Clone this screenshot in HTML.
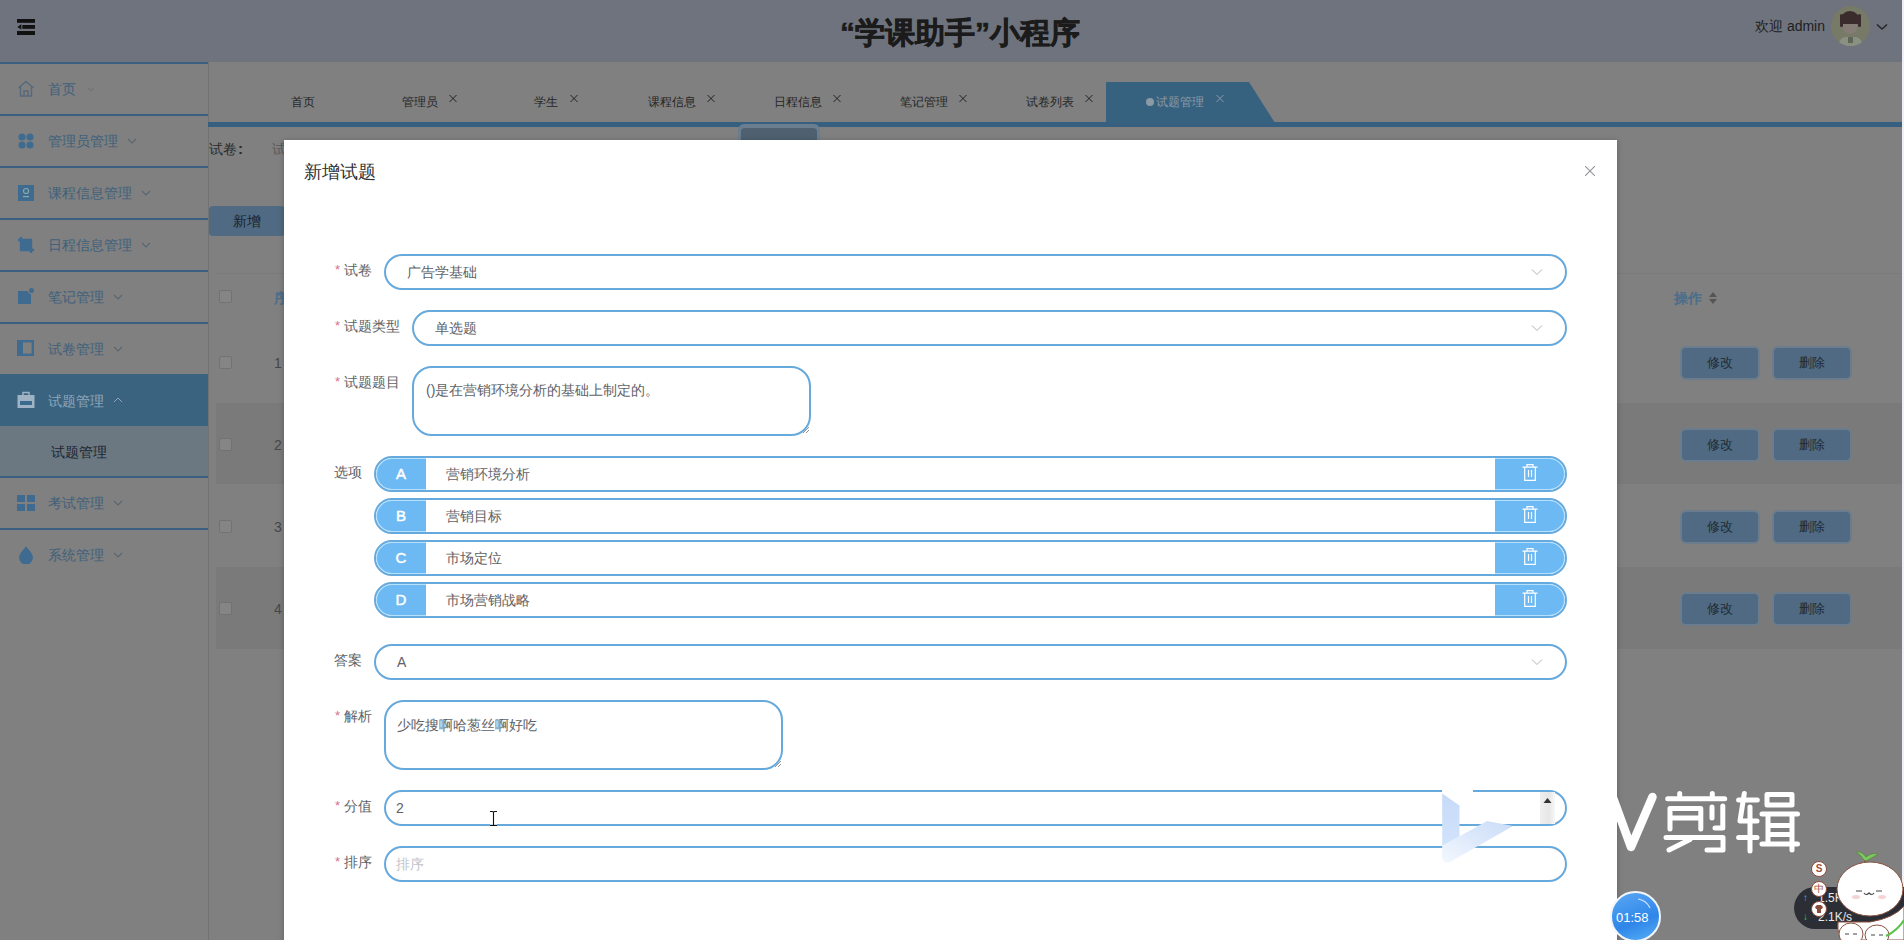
<!DOCTYPE html>
<html><head><meta charset="utf-8">
<style>
*{box-sizing:border-box;margin:0;padding:0}
html,body{width:1904px;height:940px;overflow:hidden;background:#808080;font-family:"Liberation Sans",sans-serif;position:relative}
.a{position:absolute;white-space:nowrap}
/* header */
#hdr{left:0;top:0;width:1902px;height:62px;background:#6e737d}
#rstrip{left:1902px;top:0;width:2px;height:940px;background:#efeff5}
/* sidebar */
#side{left:0;top:62px;width:209px;height:878px;background:#808080;border-right:1px solid #727272}
.sl{position:absolute;left:0;width:208px;height:2px;background:#3b5f80}
.si{position:absolute;left:48px;font-size:14px;color:#40607b;line-height:16px}
.chev{position:absolute}
/* tabs */
.tab{position:absolute;top:95px;font-size:12px;color:#262626;line-height:14px}
.tx{position:absolute;top:94px}
/* content */
.row{position:absolute;left:216px;width:1686px;height:82px}
.cb{position:absolute;left:219px;width:13px;height:13px;border:1px solid #727272;border-radius:2px;background:#858585}
.btn{position:absolute;width:76px;height:30px;border-radius:4px;background:#4f6a82;color:#1e2a35;font-size:13px;text-align:center;line-height:30px;box-shadow:0 0 0 2px #6b7d8c}
/* modal */
#modal{left:284px;top:140px;width:1333px;height:820px;background:#fff;box-shadow:0 1px 6px rgba(0,0,0,.25)}
.lbl{position:absolute;font-size:14px;color:#606266;line-height:16px}
.req{position:absolute;font-size:13px;color:#d8708c;line-height:16px}
.inp{position:absolute;border:2px solid #66a9dc;border-radius:18px;background:#fff;height:36px}
.txt{position:absolute;font-size:14px;color:#606266;line-height:16px}
.opt{position:absolute;left:374px;width:1193px;height:36px;border:2px solid #66a9dc;border-radius:18px;background:#fff;overflow:hidden}
.pre{position:absolute;left:0;top:0;width:50px;height:32px;background:#6cb9f3;border:1px solid #b4e0ff;border-right:none;border-radius:16px 0 0 16px;color:#fff;font-size:15px;text-align:center;line-height:29px;font-weight:normal;-webkit-text-stroke:0.5px #fff;text-indent:-1px}
.app{position:absolute;right:0;top:0;width:70px;height:32px;background:#6cb9f3;border:1px solid #b4e0ff;border-left:none;border-radius:0 16px 16px 0}
.otx{position:absolute;left:70px;top:8px;font-size:14px;color:#606266;line-height:16px}
</style></head><body>

<!-- HEADER -->
<div id="hdr" class="a">
  <svg class="a" style="left:17px;top:19px" width="18" height="16" viewBox="0 0 18 16">
    <rect x="0" y="0" width="18" height="3.8" fill="#111"/>
    <rect x="5.3" y="6" width="12.7" height="3.8" fill="#111"/>
    <rect x="0" y="12" width="18" height="4" fill="#111"/>
    <path d="M0.3 7.9 L4.3 5.2 L4.3 10.6 Z" fill="#111"/>
  </svg>
  <div class="a" style="left:840px;top:14px;font-size:30px;font-weight:bold;color:#1b1b1b;line-height:38px;-webkit-text-stroke:0.6px #1b1b1b">“学课助手”小程序</div>
  <div class="a" style="left:1755px;top:18px;font-size:14px;color:#1e1e22;line-height:16px">欢迎 admin</div>
  <div class="a" style="left:1831px;top:6px;width:39px;height:40px;border-radius:50%;background:#767a66;overflow:hidden">
    <div class="a" style="left:12px;top:12px;width:14px;height:16px;border-radius:3px 3px 7px 7px;background:#857d75"></div>
    <div class="a" style="left:9px;top:5px;width:20px;height:13px;border-radius:10px 10px 3px 3px;background:#3a2c2c"></div>
    <div class="a" style="left:9px;top:8px;width:3px;height:13px;border-radius:2px;background:#3a2c2c"></div>
    <div class="a" style="left:27px;top:8px;width:3px;height:13px;border-radius:2px;background:#3a2c2c"></div>
    <div class="a" style="left:8px;top:31px;width:23px;height:10px;border-radius:7px 7px 0 0;background:#8b9182"></div>
    <div class="a" style="left:17px;top:31px;width:5px;height:6px;background:#5f6658"></div>
  </div>
  <svg class="a" style="left:1876px;top:23px" width="12" height="8" viewBox="0 0 12 8"><path d="M1 1.5 L6 6 L11 1.5" stroke="#26262a" stroke-width="1.6" fill="none"/></svg>
</div>
<div id="rstrip" class="a"></div>

<!-- SIDEBAR -->
<div id="side" class="a"></div>
<div class="sl" style="top:62px"></div>
<div class="sl" style="top:114px"></div>
<div class="sl" style="top:166px"></div>
<div class="sl" style="top:218px"></div>
<div class="sl" style="top:270px"></div>
<div class="sl" style="top:322px"></div>
<div class="a" style="left:0;top:374px;width:208px;height:52px;background:#39637f"></div>
<div class="a" style="left:0;top:426px;width:208px;height:50px;background:#6b7882"></div>
<div class="sl" style="top:476px"></div>
<div class="sl" style="top:528px"></div>

<!-- icons -->
<svg class="a" style="left:17px;top:80px" width="18" height="17" viewBox="0 0 18 17"><path d="M1.5 8 L9 1.5 L16.5 8 M3.5 6.5 V16 H14.5 V6.5 M7 16 V11 H11 V16" stroke="#56697a" stroke-width="1.4" fill="none"/></svg>
<svg class="a" style="left:18px;top:133px" width="16" height="16" viewBox="0 0 16 16" fill="#3f6b90"><circle cx="4" cy="4" r="3.6"/><circle cx="12" cy="4" r="3.6"/><circle cx="4" cy="12" r="3.6"/><circle cx="12" cy="12" r="3.6"/></svg>
<svg class="a" style="left:18px;top:185px" width="16" height="16" viewBox="0 0 16 16"><rect x="0" y="0" width="16" height="16" fill="#3f6b90"/><circle cx="8" cy="6" r="2.5" stroke="#8aa" stroke-width="1.2" fill="none"/><rect x="5" y="11" width="6" height="1.2" fill="#8aa"/></svg>
<svg class="a" style="left:17px;top:236px" width="18" height="18" viewBox="0 0 18 18"><path d="M4 1 V14 H17 M1 4 H14 V17" stroke="#3f6b90" stroke-width="2.4" fill="none"/><rect x="4" y="4" width="10" height="10" fill="#3f6b90"/></svg>
<svg class="a" style="left:18px;top:288px" width="16" height="16" viewBox="0 0 16 16" fill="#3f6b90"><path d="M0 3 H10 A3 3 0 0 0 13 6 V16 H0 Z"/><circle cx="13.5" cy="2.5" r="2.5"/></svg>
<svg class="a" style="left:17px;top:340px" width="17" height="16" viewBox="0 0 17 16"><rect x="1.2" y="1.2" width="14.6" height="13.6" stroke="#3f6b90" stroke-width="2.4" fill="none"/><rect x="1" y="1" width="5" height="14" fill="#3f6b90"/></svg>
<svg class="a" style="left:17px;top:391px" width="18" height="17" viewBox="0 0 18 17"><path d="M6 4 V1.5 H12 V4" stroke="#9fb3c4" stroke-width="1.5" fill="none"/><rect x="0.5" y="4" width="17" height="13" fill="#9fb3c4"/><rect x="3" y="10" width="12" height="4" fill="#3b6a8f"/></svg>
<svg class="a" style="left:17px;top:495px" width="18" height="16" viewBox="0 0 18 16" fill="#3f6b90"><rect x="0" y="0" width="8" height="7"/><rect x="10" y="0" width="8" height="7"/><rect x="0" y="9" width="8" height="7"/><rect x="10" y="9" width="8" height="7"/></svg>
<svg class="a" style="left:18px;top:546px" width="16" height="18" viewBox="0 0 16 18" fill="#3f6b90"><path d="M8 0.5 C8 0.5 1 7.5 1 11.5 A7 7 0 0 0 15 11.5 C15 7.5 8 0.5 8 0.5 Z"/></svg>

<div class="si" style="top:81px">首页</div>
<div class="si" style="top:133px">管理员管理</div>
<div class="si" style="top:185px">课程信息管理</div>
<div class="si" style="top:237px">日程信息管理</div>
<div class="si" style="top:289px">笔记管理</div>
<div class="si" style="top:341px">试卷管理</div>
<div class="si" style="top:393px;color:#8fa5b8">试题管理</div>
<div class="a" style="left:51px;top:444px;font-size:14px;color:#1b2530;line-height:16px">试题管理</div>
<div class="si" style="top:495px">考试管理</div>
<div class="si" style="top:547px">系统管理</div>
<svg class="chev" style="left:86px;top:86px" width="9" height="6" viewBox="0 0 9 6"><path d="M2 2 L5 5 L8 1.5" stroke="#66717a" stroke-width="1" fill="none"/></svg>
<svg class="chev" style="left:127px;top:138px" width="10" height="6" viewBox="0 0 10 6"><path d="M1 1 L5 5 L9 1" stroke="#5a6670" stroke-width="1.2" fill="none"/></svg>
<svg class="chev" style="left:141px;top:190px" width="10" height="6" viewBox="0 0 10 6"><path d="M1 1 L5 5 L9 1" stroke="#5a6670" stroke-width="1.2" fill="none"/></svg>
<svg class="chev" style="left:141px;top:242px" width="10" height="6" viewBox="0 0 10 6"><path d="M1 1 L5 5 L9 1" stroke="#5a6670" stroke-width="1.2" fill="none"/></svg>
<svg class="chev" style="left:113px;top:294px" width="10" height="6" viewBox="0 0 10 6"><path d="M1 1 L5 5 L9 1" stroke="#5a6670" stroke-width="1.2" fill="none"/></svg>
<svg class="chev" style="left:113px;top:346px" width="10" height="6" viewBox="0 0 10 6"><path d="M1 1 L5 5 L9 1" stroke="#5a6670" stroke-width="1.2" fill="none"/></svg>
<svg class="chev" style="left:113px;top:397px" width="10" height="6" viewBox="0 0 10 6"><path d="M1 5 L5 1 L9 5" stroke="#8fa5b8" stroke-width="1" fill="none"/></svg>
<svg class="chev" style="left:113px;top:500px" width="10" height="6" viewBox="0 0 10 6"><path d="M1 1 L5 5 L9 1" stroke="#5a6670" stroke-width="1.2" fill="none"/></svg>
<svg class="chev" style="left:113px;top:552px" width="10" height="6" viewBox="0 0 10 6"><path d="M1 1 L5 5 L9 1" stroke="#5a6670" stroke-width="1.2" fill="none"/></svg>

<!-- TABS -->
<div class="a" style="left:208px;top:122px;width:1694px;height:5px;background:#365f80"></div>
<svg class="a" style="left:1106px;top:82px" width="170" height="41" viewBox="0 0 170 41"><path d="M0 0 H143 L169 41 H0 Z" fill="#36617f"/></svg>
<div class="tab" style="left:291px">首页</div>
<div class="tab" style="left:402px">管理员</div>
<div class="tab" style="left:534px">学生</div>
<div class="tab" style="left:648px">课程信息</div>
<div class="tab" style="left:774px">日程信息</div>
<div class="tab" style="left:900px">笔记管理</div>
<div class="tab" style="left:1026px">试卷列表</div>
<div class="a" style="left:1146px;top:98px;width:8px;height:8px;border-radius:50%;background:#8b9aa7"></div>
<div class="tab" style="left:1156px;color:#8b9aa7">试题管理</div>
<svg class="a" style="left:449px;top:95px" width="8" height="7" viewBox="0 0 8 7"><path d="M0.5 0 L7.5 7 M7.5 0 L0.5 7" stroke="#222" stroke-width="1"/></svg>
<svg class="a" style="left:570px;top:95px" width="8" height="7" viewBox="0 0 8 7"><path d="M0.5 0 L7.5 7 M7.5 0 L0.5 7" stroke="#222" stroke-width="1"/></svg>
<svg class="a" style="left:707px;top:95px" width="8" height="7" viewBox="0 0 8 7"><path d="M0.5 0 L7.5 7 M7.5 0 L0.5 7" stroke="#222" stroke-width="1"/></svg>
<svg class="a" style="left:833px;top:95px" width="8" height="7" viewBox="0 0 8 7"><path d="M0.5 0 L7.5 7 M7.5 0 L0.5 7" stroke="#222" stroke-width="1"/></svg>
<svg class="a" style="left:959px;top:95px" width="8" height="7" viewBox="0 0 8 7"><path d="M0.5 0 L7.5 7 M7.5 0 L0.5 7" stroke="#222" stroke-width="1"/></svg>
<svg class="a" style="left:1085px;top:95px" width="8" height="7" viewBox="0 0 8 7"><path d="M0.5 0 L7.5 7 M7.5 0 L0.5 7" stroke="#222" stroke-width="1"/></svg>
<svg class="a" style="left:1216px;top:95px" width="8" height="7" viewBox="0 0 8 7"><path d="M0.5 0 L7.5 7 M7.5 0 L0.5 7" stroke="#8b9aa7" stroke-width="1"/></svg>

<!-- CONTENT (behind mask) -->
<div class="a" style="left:209px;top:141px;font-size:14px;color:#2b2b2b;line-height:16px">试卷</div><div class="a" style="left:238px;top:141px;font-size:15px;color:#2b2b2b;line-height:16px;font-weight:bold">:</div>
<div class="a" style="left:272px;top:141px;font-size:14px;color:#5a5a5a;line-height:16px">试</div>
<div class="a" style="left:738px;top:124px;width:82px;height:20px;border-radius:6px;background:#6b7e8f"></div>
<div class="a" style="left:741px;top:128px;width:76px;height:16px;border-radius:4px;background:#4f6170"></div>
<div class="a" style="left:209px;top:206px;width:76px;height:30px;border-radius:4px;background:#4f6a82"></div>
<div class="a" style="left:233px;top:213px;font-size:14px;color:#1a222a;line-height:16px">新增</div>

<div class="a" style="left:215px;top:273px;width:1687px;height:1px;background:#7a7a7a"></div>
<div class="row" style="top:403px;height:81px;background:#7a7a7a"></div>
<div class="row" style="top:567px;height:82px;background:#7a7a7a"></div>
<div class="cb" style="top:290px"></div>
<div class="cb" style="top:356px"></div>
<div class="cb" style="top:438px"></div>
<div class="cb" style="top:520px"></div>
<div class="cb" style="top:602px"></div>
<div class="a" style="left:274px;top:290px;font-size:14px;font-weight:bold;color:#4a6d8a;line-height:16px">序</div>
<div class="a" style="left:274px;top:355px;font-size:14px;color:#474747;line-height:16px">1</div>
<div class="a" style="left:274px;top:437px;font-size:14px;color:#474747;line-height:16px">2</div>
<div class="a" style="left:274px;top:519px;font-size:14px;color:#474747;line-height:16px">3</div>
<div class="a" style="left:274px;top:601px;font-size:14px;color:#474747;line-height:16px">4</div>
<div class="a" style="left:1674px;top:290px;font-size:14px;font-weight:bold;color:#4a6d8a;line-height:16px">操作</div>
<svg class="a" style="left:1708px;top:291px" width="10" height="14" viewBox="0 0 10 14" fill="#555"><path d="M5 1 L9 6 H1 Z M1 8 H9 L5 13 Z"/></svg>

<div class="btn" style="left:1682px;top:348px">修改</div>
<div class="btn" style="left:1774px;top:348px">删除</div>
<div class="btn" style="left:1682px;top:430px">修改</div>
<div class="btn" style="left:1774px;top:430px">删除</div>
<div class="btn" style="left:1682px;top:512px">修改</div>
<div class="btn" style="left:1774px;top:512px">删除</div>
<div class="btn" style="left:1682px;top:594px">修改</div>
<div class="btn" style="left:1774px;top:594px">删除</div>

<!-- MODAL -->
<div id="modal" class="a"></div>
<div class="a" style="left:304px;top:162px;font-size:18px;color:#303133;line-height:20px">新增试题</div>
<svg class="a" style="left:1585px;top:166px" width="10" height="10" viewBox="0 0 10 10"><path d="M0 0 L10 10 M10 0 L0 10" stroke="#909399" stroke-width="1.1"/></svg>

<!-- form -->
<div class="req" style="left:335px;top:262px">*</div><div class="lbl" style="left:344px;top:262px">试卷</div>
<div class="inp" style="left:384px;top:254px;width:1183px"></div>
<div class="txt" style="left:407px;top:264px">广告学基础</div>
<svg class="a" style="left:1531px;top:268px" width="12" height="8" viewBox="0 0 12 8"><path d="M1 1.5 L6 6.5 L11 1.5" stroke="#b4b4b4" stroke-width="1" fill="none"/></svg>

<div class="req" style="left:335px;top:318px">*</div><div class="lbl" style="left:344px;top:318px">试题类型</div>
<div class="inp" style="left:412px;top:310px;width:1155px"></div>
<div class="txt" style="left:435px;top:320px">单选题</div>
<svg class="a" style="left:1531px;top:324px" width="12" height="8" viewBox="0 0 12 8"><path d="M1 1.5 L6 6.5 L11 1.5" stroke="#b4b4b4" stroke-width="1" fill="none"/></svg>

<div class="req" style="left:335px;top:374px">*</div><div class="lbl" style="left:344px;top:374px">试题题目</div>
<div class="inp" style="left:412px;top:366px;width:399px;height:70px;border-radius:20px"></div>
<div class="txt" style="left:426px;top:382px">()是在营销环境分析的基础上制定的。</div>

<div class="lbl" style="left:334px;top:464px">选项</div>
<div class="opt" style="top:456px"><div class="pre">A</div><div class="otx">营销环境分析</div><div class="app"></div></div>
<div class="opt" style="top:498px"><div class="pre">B</div><div class="otx">营销目标</div><div class="app"></div></div>
<div class="opt" style="top:540px"><div class="pre">C</div><div class="otx">市场定位</div><div class="app"></div></div>
<div class="opt" style="top:582px"><div class="pre">D</div><div class="otx">市场营销战略</div><div class="app"></div></div>
<svg class="a" style="left:1522px;top:464px" width="16" height="17" viewBox="0 0 16 17"><path d="M5 3 V0.7 H11 V3 M0.5 3.2 H15.5 M2.7 3.2 V16.3 H13.3 V3.2 M6.5 6 V13 M9.5 6 V13" stroke="#fff" stroke-width="1.2" fill="none"/></svg>
<svg class="a" style="left:1522px;top:506px" width="16" height="17" viewBox="0 0 16 17"><path d="M5 3 V0.7 H11 V3 M0.5 3.2 H15.5 M2.7 3.2 V16.3 H13.3 V3.2 M6.5 6 V13 M9.5 6 V13" stroke="#fff" stroke-width="1.2" fill="none"/></svg>
<svg class="a" style="left:1522px;top:548px" width="16" height="17" viewBox="0 0 16 17"><path d="M5 3 V0.7 H11 V3 M0.5 3.2 H15.5 M2.7 3.2 V16.3 H13.3 V3.2 M6.5 6 V13 M9.5 6 V13" stroke="#fff" stroke-width="1.2" fill="none"/></svg>
<svg class="a" style="left:1522px;top:590px" width="16" height="17" viewBox="0 0 16 17"><path d="M5 3 V0.7 H11 V3 M0.5 3.2 H15.5 M2.7 3.2 V16.3 H13.3 V3.2 M6.5 6 V13 M9.5 6 V13" stroke="#fff" stroke-width="1.2" fill="none"/></svg>

<div class="lbl" style="left:334px;top:652px">答案</div>
<div class="inp" style="left:374px;top:644px;width:1193px"></div>
<div class="txt" style="left:397px;top:654px">A</div>
<svg class="a" style="left:1531px;top:658px" width="12" height="8" viewBox="0 0 12 8"><path d="M1 1.5 L6 6.5 L11 1.5" stroke="#b4b4b4" stroke-width="1" fill="none"/></svg>

<div class="req" style="left:335px;top:708px">*</div><div class="lbl" style="left:344px;top:708px">解析</div>
<div class="inp" style="left:384px;top:700px;width:399px;height:70px;border-radius:20px"></div>
<div class="txt" style="left:397px;top:717px">少吃搜啊哈葱丝啊好吃</div>

<div class="req" style="left:335px;top:798px">*</div><div class="lbl" style="left:344px;top:798px">分值</div>
<div class="inp" style="left:384px;top:790px;width:1183px"></div>
<div class="txt" style="left:396px;top:800px">2</div>

<div class="req" style="left:335px;top:854px">*</div><div class="lbl" style="left:344px;top:854px">排序</div>
<div class="inp" style="left:384px;top:846px;width:1183px"></div>
<div class="txt" style="left:396px;top:856px;color:#c0c4cc">排序</div>

<!-- resize handles -->
<svg class="a" style="left:800px;top:424px" width="10" height="10" viewBox="0 0 10 10"><path d="M9 3 L3 9 M9 6 L6 9" stroke="#777" stroke-width="0.8"/></svg>
<svg class="a" style="left:772px;top:758px" width="10" height="10" viewBox="0 0 10 10"><path d="M9 3 L3 9 M9 6 L6 9" stroke="#777" stroke-width="0.8"/></svg>
<!-- number spinner -->
<div class="a" style="left:1540px;top:792px;width:15px;height:32px;background:linear-gradient(90deg,#f0f0f0,#e6e6e6 60%,#f8f8f8)"></div>
<svg class="a" style="left:1543px;top:797px" width="9" height="7" viewBox="0 0 9 7"><path d="M0.5 6 L4.5 1 L8.5 6 Z" fill="#333"/></svg>
<!-- I-beam cursor -->
<svg class="a" style="left:489px;top:810px" width="9" height="17" viewBox="0 0 9 17"><path d="M1 1.5 H3.5 Q4.5 1.5 4.5 2.5 Q4.5 1.5 5.5 1.5 H8 M4.5 2.5 V15 M1 15.5 H3.5 Q4.5 15.5 4.5 14.5 Q4.5 15.5 5.5 15.5 H8" stroke="#fff" stroke-width="2.6" fill="none" stroke-opacity="0.8"/><path d="M1 1.5 H3.5 Q4.5 1.5 4.5 2.5 Q4.5 1.5 5.5 1.5 H8 M4.5 2.5 V15 M1 15.5 H3.5 Q4.5 15.5 4.5 14.5 Q4.5 15.5 5.5 15.5 H8" stroke="#111" stroke-width="1.1" fill="none"/></svg>

<!-- watermark play logo -->
<svg class="a" style="left:1430px;top:778px" width="100" height="92" viewBox="1430 778 100 92">
  <defs>
    <linearGradient id="g1" x1="0" y1="0" x2="0" y2="1"><stop offset="0" stop-color="#c6daf8"/><stop offset="1" stop-color="#d2e3fb"/></linearGradient>
    <linearGradient id="g2" x1="0" y1="1" x2="1" y2="0"><stop offset="0" stop-color="#f4f8fe"/><stop offset="0.5" stop-color="#dde9fb"/><stop offset="1" stop-color="#cadcf8"/></linearGradient>
  </defs>
  <path d="M1442 784 L1473 788 L1473 797 L1459.5 805.4 L1442 793.4 Z" fill="#fff"/>
  <path d="M1442.2 793.4 L1459.5 805.4 L1459.5 836.5 L1442.2 846 Z" fill="url(#g1)"/>
  <path d="M1442.2 846 L1487 821 L1513 826 L1450 862 Q1442 864 1442 856 Z" fill="url(#g2)"/>
</svg>

<!-- watermark text V剪辑 -->
<svg class="a" style="left:1600px;top:784px" width="210" height="74" viewBox="1600 784 210 74" fill="none" stroke="#fff" stroke-linecap="round" stroke-linejoin="round">
  <path d="M1612.7 797 L1631 847 L1652.5 797" stroke-width="8.5"/>
  <g stroke-width="5">
    <path d="M1679.7 793.5 V795.5 M1712.3 793.5 V795.5"/>
    <path d="M1667.7 798.7 H1724.7"/>
    <path d="M1670 829 V808.5 H1700.8 V829 M1670 818 H1700.8"/>
    <path d="M1712 807 V818 M1722.8 806 V828 H1715"/>
    <path d="M1666 837.5 H1723 V850 H1707 M1690 839.4 L1669 850"/>
    <path d="M1744.3 793.4 L1740 821 H1757 M1738.6 800 H1757.3 M1750 807 V851 M1738.6 837.5 H1757"/>
    <path d="M1767 794.5 H1792 V805 H1767 Z M1762 814 H1797.5 M1768 817 V844 M1792 817 V850 M1768 825.5 H1792 M1768 834.5 H1792 M1762 844 H1797.5"/>
  </g>
</svg>

<!-- timer -->
<div class="a" style="left:1610px;top:891px;width:51px;height:51px;border-radius:50%;background:linear-gradient(160deg,#5aa8f5,#2f86e8 60%,#58b0f8);border:2px solid #f2f6fb"></div>
<div class="a" style="left:1616px;top:910px;font-size:13px;color:#fff;line-height:16px">01:58</div>
<svg class="a" style="left:1636px;top:898px" width="16" height="12" viewBox="0 0 16 12"><path d="M2 1 Q10 2 14 10" stroke="#cfe6ff" stroke-width="1.2" fill="none"/></svg>

<!-- tray -->
<div class="a" style="left:1794px;top:887px;width:130px;height:42px;border-radius:21px;background:#2b2f35"></div>
<div class="a" style="left:1803px;top:892px;font-size:10px;color:#4fb0ff;line-height:12px">↑</div>
<div class="a" style="left:1803px;top:911px;font-size:10px;color:#38c060;line-height:12px">↓</div>
<div class="a" style="left:1818px;top:891px;font-size:12px;color:#e8e8e8;line-height:14px">1.5K/s</div>
<div class="a" style="left:1818px;top:910px;font-size:12px;color:#e8e8e8;line-height:14px">2.1K/s</div>
<div class="a" style="left:1811px;top:861px;width:16px;height:16px;border-radius:50%;background:#fff;border:1.5px solid #8a4a3a;font-size:10px;color:#a0503a;text-align:center;line-height:13px;font-weight:bold">S</div>
<div class="a" style="left:1811px;top:881px;width:16px;height:16px;border-radius:50%;background:#fff;border:1.5px solid #8a4a3a;font-size:10px;color:#a0503a;text-align:center;line-height:13px">中</div>
<div class="a" style="left:1811px;top:901px;width:16px;height:16px;border-radius:50%;background:#fff;border:1.5px solid #8a4a3a"></div>
<svg class="a" style="left:1814px;top:904px" width="10" height="10" viewBox="0 0 10 10"><path d="M1 3 L3 1 H7 L9 3 L8 5 H7 V9 H3 V5 H2 Z" fill="#8a4a3a"/></svg>
<!-- character -->
<svg class="a" style="left:1790px;top:846px" width="114" height="94" viewBox="0 0 114 94">
  <path d="M74 14 Q70 8 66 6 Q72 5 76 11 Q82 6 88 8 Q82 12 76 15" fill="#7cc860" stroke="#5a8a3a" stroke-width="0.8"/>
  <path d="M75 14 V17" stroke="#7a4a2a" stroke-width="1"/>
  <path d="M48 76 Q46 94 60 94 H114 V60 Q104 72 80 76 Z" fill="#fff" stroke="#8a5040" stroke-width="1"/>
  <ellipse cx="80" cy="43" rx="33" ry="27" fill="#fff" stroke="#8a5040" stroke-width="1"/>
  <path d="M66 45 H72 M86 45 H92 M74 47 Q76 50 79 47 Q82 50 84 47" stroke="#444" stroke-width="1.2" fill="none"/>
  <ellipse cx="66" cy="51" rx="4" ry="2" fill="#f4d4d4"/>
  <ellipse cx="92" cy="51" rx="4" ry="2" fill="#f4d4d4"/>
  <ellipse cx="61" cy="88" rx="12" ry="11" fill="#fff" stroke="#8a5040" stroke-width="1"/>
  <ellipse cx="87" cy="89" rx="12" ry="10" fill="#fff" stroke="#8a5040" stroke-width="1"/>
  <path d="M55 88 H59 M63 88 H67 M81 89 H85 M89 89 H93" stroke="#444" stroke-width="1"/>
  <path d="M96 90 Q108 84 114 74" stroke="#5cc04a" stroke-width="2" fill="none"/>
</svg>
</body></html>
